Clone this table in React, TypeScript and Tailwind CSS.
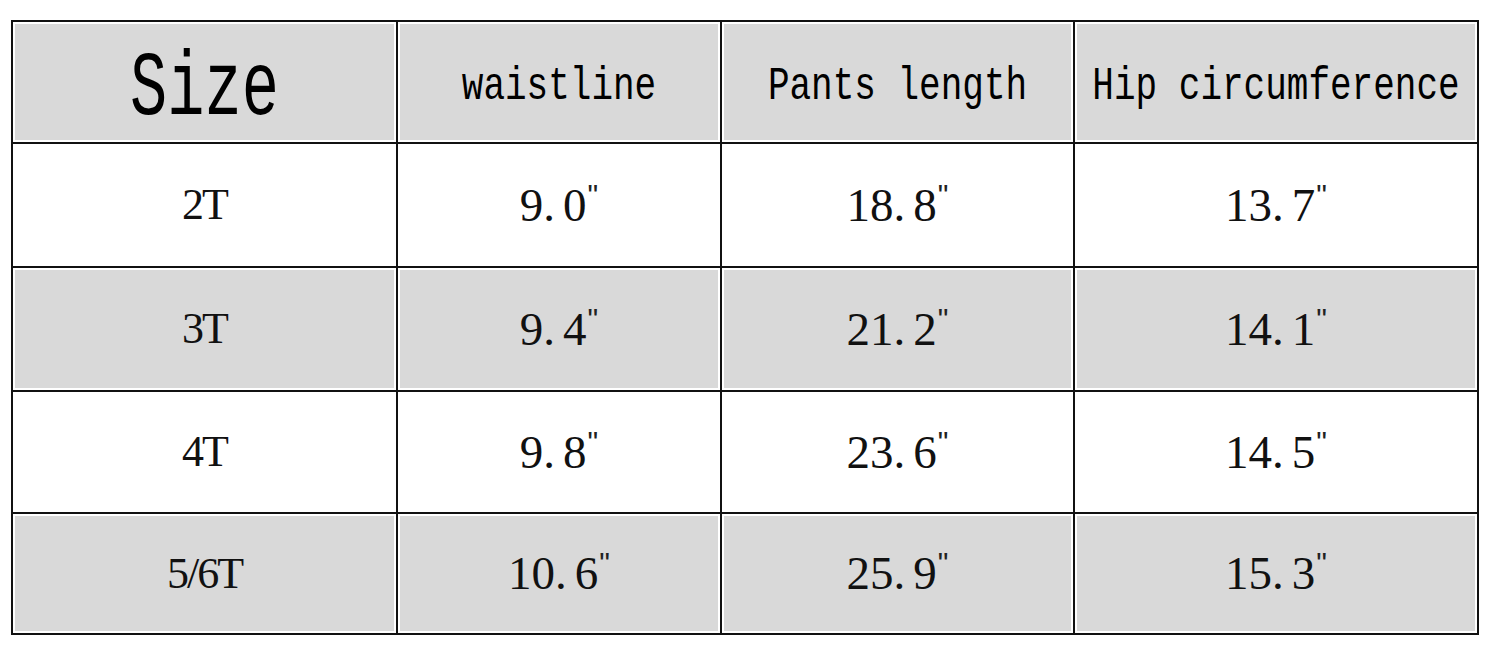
import React from 'react'

type Row = { size: string; waist: string; length: string; hip: string }

const rows: Row[] = [
    { size: '2T', waist: '9.0', length: '18.8', hip: '13.7' },
    { size: '3T', waist: '9.4', length: '21.2', hip: '14.1' },
    { size: '4T', waist: '9.8', length: '23.6', hip: '14.5' },
    { size: '5/6T', waist: '10.6', length: '25.9', hip: '15.3' },
]

// value with the small inch mark after it
const Inch = ({ value }: { value: string }) => {
    const [whole, frac] = value.split('.')
    return (
        <span className="flex items-start font-['Liberation_Serif',serif] text-[47px] leading-none text-[#111]">
            <span>{whole}.</span>
            <span className="ml-[8px]">{frac}</span>
            <span className="-mt-[2px] ml-[1px] font-['Liberation_Sans',sans-serif] text-[30px] leading-none text-[#222]">"</span>
        </span>
    )
}

const Cell = ({ gray, children }: { gray: boolean; children: React.ReactNode }) => (
    <div className={gray ? 'bg-white p-[2px]' : 'bg-white'}>
        <div className={`flex h-full items-center justify-center ${gray ? 'bg-[#d9d9d9]' : 'bg-white'}`}>
            {children}
        </div>
    </div>
)

const Head = ({ children }: { children: React.ReactNode }) => (
    <span className="mt-[10px] inline-block scale-y-130 font-['Liberation_Mono',monospace] text-[36px] leading-none text-black">{children}</span>
)

const App = () => {
    return (
        <div className="h-[651px] w-[1500px] bg-white pl-[11px] pt-[20px]">
            <div className="grid w-[1468px] grid-cols-[383px_322px_351px_402px] grid-rows-[120px_122px_122px_120px_119px] gap-[2px] border-2 border-[#111] bg-[#111]">
                <Cell gray>
                    <span className="mt-[18px] inline-block scale-y-145 font-['Liberation_Mono',monospace] text-[62px] leading-none text-black">Size</span>
                </Cell>
                <Cell gray>
                    <Head>waistline</Head>
                </Cell>
                <Cell gray>
                    <Head>Pants length</Head>
                </Cell>
                <Cell gray>
                    <Head>Hip circumference</Head>
                </Cell>

                {rows.map((r, i) => {
                    const gray = i % 2 === 1
                    return (
                        <React.Fragment key={r.size}>
                            <Cell gray={gray}>
                                <span className="font-['Liberation_Serif',serif] text-[44px] leading-none tracking-[-2px] text-[#111]">{r.size}</span>
                            </Cell>
                            <Cell gray={gray}>
                                <Inch value={r.waist} />
                            </Cell>
                            <Cell gray={gray}>
                                <Inch value={r.length} />
                            </Cell>
                            <Cell gray={gray}>
                                <Inch value={r.hip} />
                            </Cell>
                        </React.Fragment>
                    )
                })}
            </div>
        </div>
    )
}

export default App
